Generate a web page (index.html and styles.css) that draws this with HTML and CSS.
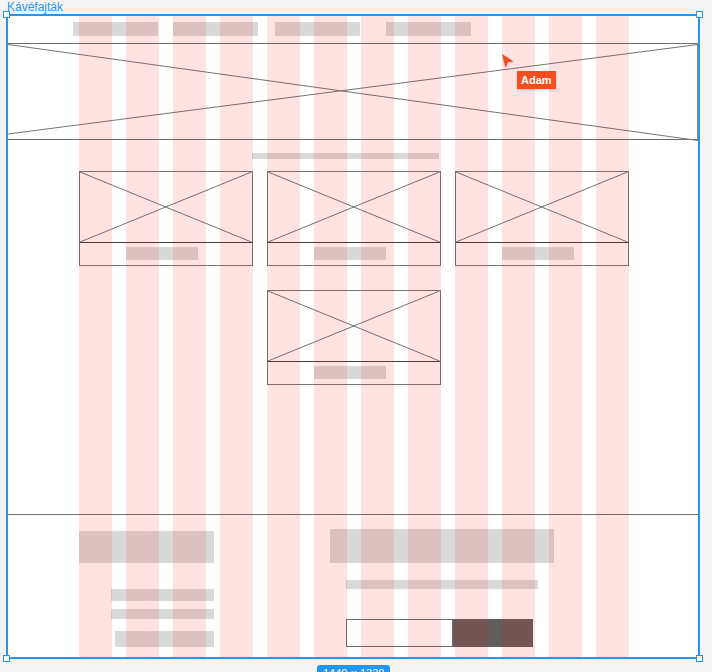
FILE: index.html
```html
<!DOCTYPE html>
<html lang="hu">
<head>
  <meta charset="UTF-8">
  <title>Kávéfajták</title>
  <link rel="stylesheet" href="styles.css">
</head>
<body>

  <div class="frame-label">Kávéfajták</div>

  <div class="artboard">

    <header class="nav">
      <span class="bar nav-item"></span>
      <span class="bar nav-item"></span>
      <span class="bar nav-item"></span>
      <span class="bar nav-item"></span>
    </header>

    <div class="hero">
      <svg class="hero-x" width="690" height="97" viewBox="0 0 690 97">
        <line x1="0" y1="0.5" x2="690" y2="96.5"></line>
        <line x1="0" y1="90" x2="690" y2="0.5"></line>
      </svg>
    </div>

    <main class="types">
      <div class="bar types-title"></div>

      <div class="cards">
        <div class="card">
          <div class="card-img">
            <svg viewBox="0 0 100 100" preserveAspectRatio="none">
              <line x1="0" y1="0" x2="100" y2="100"></line>
              <line x1="0" y1="100" x2="100" y2="0"></line>
            </svg>
          </div>
          <div class="card-caption"><span class="bar caption-bar"></span></div>
        </div>
        <div class="card">
          <div class="card-img">
            <svg viewBox="0 0 100 100" preserveAspectRatio="none">
              <line x1="0" y1="0" x2="100" y2="100"></line>
              <line x1="0" y1="100" x2="100" y2="0"></line>
            </svg>
          </div>
          <div class="card-caption"><span class="bar caption-bar"></span></div>
        </div>
        <div class="card">
          <div class="card-img">
            <svg viewBox="0 0 100 100" preserveAspectRatio="none">
              <line x1="0" y1="0" x2="100" y2="100"></line>
              <line x1="0" y1="100" x2="100" y2="0"></line>
            </svg>
          </div>
          <div class="card-caption"><span class="bar caption-bar"></span></div>
        </div>
        <div class="card card-center">
          <div class="card-img">
            <svg viewBox="0 0 100 100" preserveAspectRatio="none">
              <line x1="0" y1="0" x2="100" y2="100"></line>
              <line x1="0" y1="100" x2="100" y2="0"></line>
            </svg>
          </div>
          <div class="card-caption"><span class="bar caption-bar"></span></div>
        </div>
      </div>
    </main>

    <footer class="footer">
      <div class="footer-left">
        <span class="bar f-title"></span>
        <span class="bar f-line1"></span>
        <span class="bar f-line2"></span>
        <span class="bar f-line3"></span>
      </div>
      <div class="footer-right">
        <span class="bar s-title"></span>
        <span class="bar s-line"></span>
        <div class="subscribe">
          <span class="s-input"></span>
          <span class="s-button"></span>
        </div>
      </div>
    </footer>

    <!-- layout grid overlay -->
    <div class="grid-overlay">
      <span></span><span></span><span></span><span></span>
      <span></span><span></span><span></span><span></span>
      <span></span><span></span><span></span><span></span>
    </div>

    <div class="cursor">
      <svg width="14" height="16" viewBox="0 0 14 16">
        <path d="M1 1 L12.5 8.5 L7 9 L4.5 14.5 Z"></path>
      </svg>
      <span class="cursor-name">Adam</span>
    </div>

    <span class="handle tl"></span>
    <span class="handle tr"></span>
    <span class="handle bl"></span>
    <span class="handle br"></span>
  </div>

  <div class="size-pill">1440 × 1338</div>

</body>
</html>
```

FILE: styles.css
```css
html, body {
  margin: 0;
  height: 672px;
  overflow: hidden;
}

body {
  background-color: #f4f4f4;
  font-family: 'Liberation Sans', Arial, sans-serif;
  color: #333;
}

.frame-label {
  padding-left: 7px;
  height: 14px;
  font-size: 12px;
  line-height: 14px;
  color: #2b95f1;
}

.artboard {
  position: relative;
  margin-left: 6px;
  width: 690px;
  height: 641px;
  border: 2px solid #2196f3;
  background: white;
}

.bar {
  display: block;
  background: #d9d9d9;
}

/* header */
.nav {
  display: flex;
  height: 27px;
  padding-left: 65px;
  padding-top: 6px;
  box-sizing: border-box;
}
.nav-item {
  width: 85px;
  height: 14px;
  margin-right: 15px;
}
.nav-item:nth-child(2) { margin-right: 17px; }
.nav-item:nth-child(3) { margin-right: 26px; }

/* hero placeholder */
.hero {
  height: 97px;
  border-top: 1px solid #6e6e6e;
  border-bottom: 1px solid #6e6e6e;
  border-right: 1px solid #8a8a8a;
  box-sizing: border-box;
}
.hero-x {
  display: block;
}
.hero-x line,
.card-img line {
  stroke: #757575;
  stroke-width: 1;
  vector-effect: non-scaling-stroke;
}

/* coffee types */
.types {
  height: 375px;
  border-bottom: 1px solid #707070;
  box-sizing: border-box;
  padding-top: 13px;
}
.types-title {
  margin-left: 244px;
  width: 187px;
  height: 6px;
}
.cards {
  display: grid;
  grid-template-columns: repeat(3, 173.5px);
  column-gap: 14.5px;
  row-gap: 24px;
  margin-left: 71px;
  margin-top: 12px;
}
.card-center {
  grid-column: 2;
}
.card-img {
  height: 72px;
  border: 1px solid #777;
  border-bottom-color: #3f3f3f;
  box-sizing: border-box;
}
.card-img svg {
  display: block;
  width: 100%;
  height: 100%;
}
.card-caption {
  height: 23px;
  border: 1px solid #777;
  border-top: none;
  box-sizing: border-box;
  padding-top: 4px;
}
.caption-bar {
  margin-left: 46px;
  width: 72px;
  height: 13px;
}

/* footer */
.footer {
  display: flex;
  height: 142px;
}
.footer-left {
  display: flex;
  flex-direction: column;
  align-items: flex-end;
  margin-left: 71px;
  width: 135px;
  padding-top: 16px;
}
.f-title { width: 135px; height: 32px; }
.f-line1 { width: 103px; height: 12px; margin-top: 26px; }
.f-line2 { width: 103px; height: 10px; margin-top: 8px; }
.f-line3 { width: 99px; height: 16px; margin-top: 12px; }

.footer-right {
  margin-left: 116px;
  padding-top: 14px;
}
.s-title { width: 224px; height: 34px; }
.s-line { width: 192px; height: 9px; margin-top: 17px; margin-left: 16px; }
.subscribe {
  display: flex;
  margin-top: 30px;
  margin-left: 16px;
}
.s-input {
  width: 107px;
  height: 28px;
  border: 1px solid #6e6e6e;
  box-sizing: border-box;
}
.s-button {
  width: 80px;
  height: 28px;
  background: #625e5e;
}

/* overlays */
.grid-overlay {
  position: absolute;
  top: 0;
  bottom: 0;
  left: 71px;
  display: grid;
  grid-template-columns: repeat(12, 32.5px);
  column-gap: 14.5px;
  pointer-events: none;
}
.grid-overlay span {
  background: rgba(255, 0, 0, 0.11);
}

.cursor {
  position: absolute;
  left: 493px;
  top: 37px;
}
.cursor svg {
  display: block;
  filter: drop-shadow(0 1px 1px rgba(0,0,0,0.25));
}
.cursor path {
  fill: #f24e1e;
}
.cursor-name {
  position: absolute;
  left: 16px;
  top: 18px;
  height: 18px;
  padding: 0 4px;
  background: #f24e1e;
  color: white;
  font-size: 11px;
  font-weight: bold;
  line-height: 18px;
  white-space: nowrap;
  box-shadow: 0 1px 2px rgba(0,0,0,0.2);
}

.handle {
  position: absolute;
  width: 5px;
  height: 5px;
  background: white;
  border: 1.5px solid #2196f3;
}
.handle.tl { left: -5px; top: -5px; }
.handle.tr { right: -5px; top: -5px; }
.handle.bl { left: -5px; bottom: -5px; }
.handle.br { right: -5px; bottom: -5px; }

.size-pill {
  display: inline-block;
  margin-top: 6px;
  margin-left: 317px;
  padding: 1px 6px;
  border-radius: 3px;
  background: #2196f3;
  color: white;
  font-size: 11px;
  line-height: 14px;
}
```
